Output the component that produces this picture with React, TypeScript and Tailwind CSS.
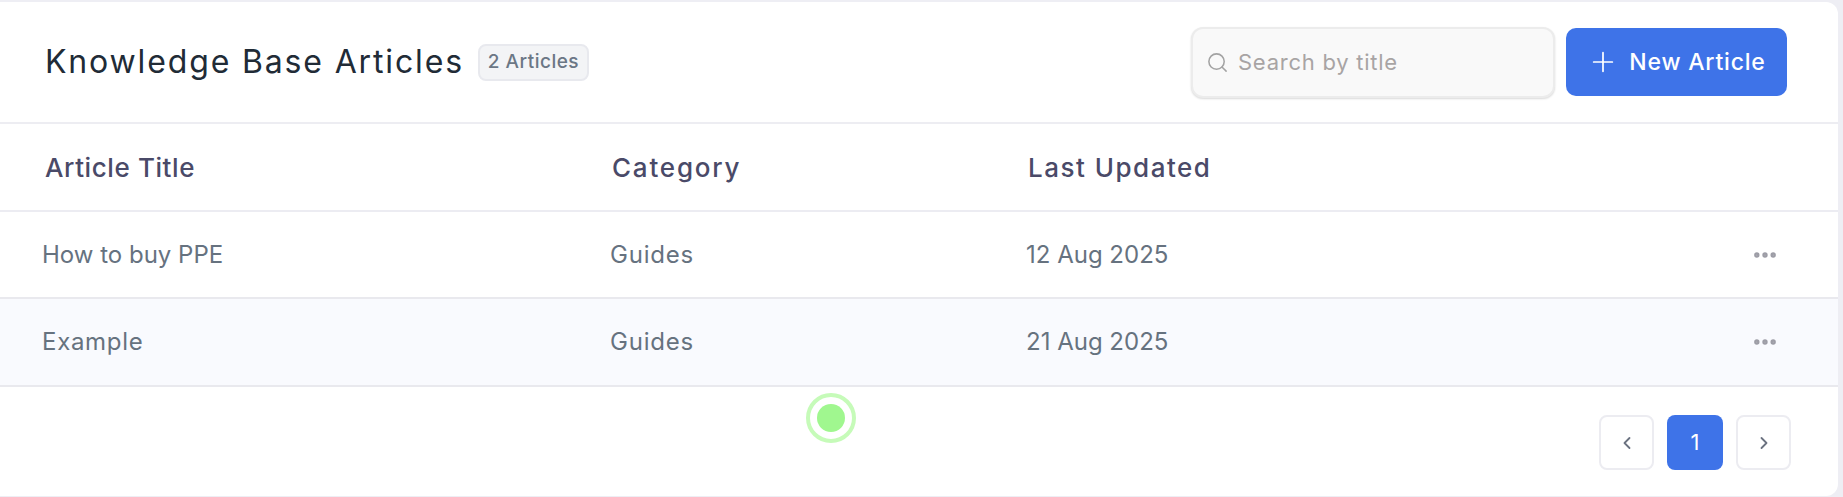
import { ChevronLeft, ChevronRight, Ellipsis, Plus, Search } from 'lucide-react'

const articles = [
  { title: 'How to buy PPE', category: 'Guides', updated: '12 Aug 2025' },
  { title: 'Example', category: 'Guides', updated: '21 Aug 2025' },
]

export default function App() {
  return (
    <div className="h-[497px] overflow-hidden bg-[#eeeef4] pt-[2px] pr-[5px] font-['Inter','Noto_Sans',sans-serif]">
      <div className="h-[494px] overflow-hidden rounded-r-[12px] bg-white">
        {/* header */}
        <div className="flex h-[122px] items-center justify-between border-b-2 border-[#ededf2] pr-[51px] pl-[45px]">
          <div className="flex items-center gap-[14px]">
            <h1 className="text-[32px] font-normal tracking-[1.85px] text-[#212b36]">Knowledge Base Articles</h1>
            <span className="flex h-[37px] w-[111px] items-center justify-center rounded-[8px] border-2 border-[#e8e9ee] bg-[#f3f4f6] text-[19px] font-medium tracking-[0.5px] text-[#6b7785]">
              2 Articles
            </span>
          </div>
          <div className="flex items-center gap-[11px]">
            <div className="flex h-[71px] w-[364px] items-center gap-[9px] rounded-[12px] border-2 border-[#ececec] bg-[#f9f9f9] px-[13px] shadow-[0_1px_2px_rgba(0,0,0,0.15)]">
              <Search className="h-[23px] w-[23px] text-[#a3a3a3]" strokeWidth={1.6} />
              <span className="text-[22px] tracking-[0.75px] text-[#a8a4a4]">Search by title</span>
            </div>
            <button className="flex h-[68px] w-[221px] items-center justify-center gap-[10px] rounded-[10px] bg-[#3e73e8] text-[23px] font-medium tracking-[0.8px] text-white">
              <Plus className="h-[32px] w-[32px]" strokeWidth={1.3} />
              New Article
            </button>
          </div>
        </div>

        {/* table */}
        <div className="grid h-[88px] grid-cols-[612px_416px_1fr] items-center border-b-2 border-[#ececf2] text-[26px] font-medium text-[#4a4a68]">
          <div className="pl-[45px] tracking-[0.6px]">Article Title</div>
          <div className="tracking-[1.8px]">Category</div>
          <div className="tracking-[1.5px]">Last Updated</div>
        </div>
        {articles.map((a, i) => (
          <div
            key={a.title}
            className={`grid grid-cols-[610px_416px_1fr_auto] items-center border-b-2 border-[#e9e9ee] pr-[59px] text-[24px] text-[#66727f] ${i % 2 === 1 ? 'h-[88px] bg-[#f9fafe]' : 'h-[87px] bg-white'}`}
          >
            <div className={`pl-[42px] ${i === 1 ? 'tracking-[0.7px]' : ''}`}>{a.title}</div>
            <div className="tracking-[0.8px]">{a.category}</div>
            <div>{a.updated}</div>
            <Ellipsis className="h-[28px] w-[28px] text-[#9d9da6]" strokeWidth={2.6} />
          </div>
        ))}

        {/* pagination */}
        <div className="relative flex h-[108px] items-start justify-end gap-[13px] pt-[28px] pr-[47px]">
          <div className="absolute top-[6px] left-[806px] flex h-[50px] w-[50px] items-center justify-center rounded-full border-[4px] border-[#c6fbb9] bg-white">
            <div className="h-[28px] w-[28px] rounded-full bg-[#a0f78f]" />
          </div>
          <button className="flex h-[55px] w-[55px] items-center justify-center rounded-[8px] border-2 border-[#ececf1] bg-white text-[#6b7280]">
            <ChevronLeft className="h-[20px] w-[20px]" strokeWidth={2.2} />
          </button>
          <button className="flex h-[55px] w-[56px] items-center justify-center rounded-[8px] bg-[#3e73e8] text-[22px] text-white">1</button>
          <button className="flex h-[55px] w-[55px] items-center justify-center rounded-[8px] border-2 border-[#ececf1] bg-white text-[#6b7280]">
            <ChevronRight className="h-[20px] w-[20px]" strokeWidth={2.2} />
          </button>
        </div>
      </div>
    </div>
  )
}
